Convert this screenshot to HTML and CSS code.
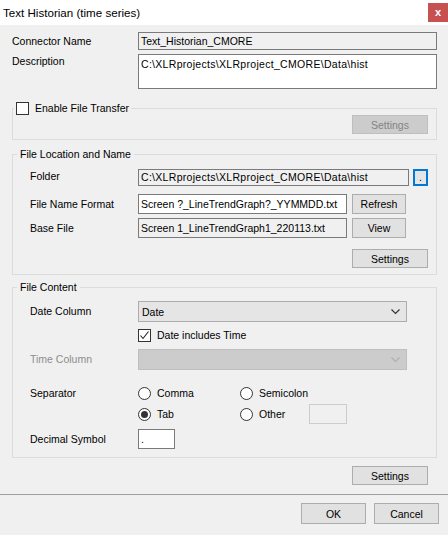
FILE: index.html
```html
<!DOCTYPE html>
<html>

<head>
    <title>Text Historian (time series)</title>
    <meta charset="UTF-8" />
    <link rel="stylesheet" href="styles.css">
</head>

<body>
    <div id="dialog">
        <div class="titlebar">
            <span class="title">Text Historian (time series)</span>
            <button class="close">x</button>
        </div>

        <div class="body">
            <div class="row row-name">
                <span class="label">Connector Name</span>
                <div class="field readonly w-full">Text_Historian_CMORE</div>
            </div>
            <div class="row row-desc">
                <span class="label">Description</span>
                <div class="field memo w-full path">C:\XLRprojects\XLRproject_CMORE\Data\hist</div>
            </div>

            <fieldset class="group group-transfer">
                <legend><span class="check"></span>Enable File Transfer</legend>
                <div class="actions">
                    <button class="btn btn-settings" disabled>Settings</button>
                </div>
            </fieldset>

            <fieldset class="group group-location">
                <legend>File Location and Name</legend>
                <div class="row row-folder">
                    <span class="label">Folder</span>
                    <div class="field readonly w-folder path">C:\XLRprojects\XLRproject_CMORE\Data\hist</div>
                    <button class="btn btn-dots">.</button>
                </div>
                <div class="row row-format">
                    <span class="label">File Name Format</span>
                    <div class="field w-file">Screen ?_LineTrendGraph?_YYMMDD.txt</div>
                    <button class="btn btn-side">Refresh</button>
                </div>
                <div class="row row-base">
                    <span class="label">Base File</span>
                    <div class="field readonly w-file">Screen 1_LineTrendGraph1_220113.txt</div>
                    <button class="btn btn-side">View</button>
                </div>
                <div class="actions actions-location">
                    <button class="btn btn-settings">Settings</button>
                </div>
            </fieldset>

            <fieldset class="group group-content">
                <legend>File Content</legend>
                <div class="row row-date">
                    <span class="label">Date Column</span>
                    <div class="combo">
                        <span>Date</span>
                        <svg width="9" height="6" viewBox="0 0 9 6"><path d="M0.5 0.5 L4.5 4.5 L8.5 0.5" fill="none" stroke="#333" stroke-width="1.2"/></svg>
                    </div>
                </div>
                <div class="row row-includes">
                    <span class="label"></span>
                    <span class="check checked">
                        <svg width="11" height="11" viewBox="0 0 11 11"><path d="M1.5 5.5 L4 8.5 L9.5 1.5" fill="none" stroke="#222" stroke-width="1.1"/></svg>
                    </span>
                    <span class="check-text">Date includes Time</span>
                </div>
                <div class="row row-time">
                    <span class="label disabled">Time Column</span>
                    <div class="combo combo-disabled">
                        <span></span>
                        <svg width="9" height="6" viewBox="0 0 9 6"><path d="M0.5 0.5 L4.5 4.5 L8.5 0.5" fill="none" stroke="#b0b0b0" stroke-width="1.2"/></svg>
                    </div>
                </div>
                <div class="row row-separator">
                    <span class="label">Separator</span>
                    <div class="radios">
                        <span class="radio-item"><span class="radio"></span>Comma</span>
                        <span class="radio-item"><span class="radio"></span>Semicolon</span>
                        <span class="radio-item"><span class="radio on"></span>Tab</span>
                        <span class="radio-item"><span class="radio"></span><span class="radio-text">Other</span><span class="field other"></span></span>
                    </div>
                </div>
                <div class="row row-decimal">
                    <span class="label">Decimal Symbol</span>
                    <div class="field decimal">.</div>
                </div>
            </fieldset>

            <div class="actions actions-content">
                <button class="btn btn-settings">Settings</button>
            </div>
        </div>

        <div class="footer">
            <button class="btn btn-dialog">OK</button>
            <button class="btn btn-dialog">Cancel</button>
        </div>
    </div>
</body>

</html>
```

FILE: styles.css
```css
* {
    box-sizing: border-box;
}

body {
    margin: 0;
    background: #f0f0f0;
    font-family: "Liberation Sans", Arial, sans-serif;
    font-size: 10.5px;
    color: #000;
}

#dialog {
    width: 448px;
    height: 535px;
    background: #f0f0f0;
}

/* window caption */
.titlebar {
    height: 25px;
    background: #fff;
    display: flex;
    justify-content: space-between;
    align-items: flex-start;
}

.title {
    font-size: 11.6px;
    line-height: 15px;
    padding: 5px 0 0 3px;
}

.close {
    width: 20px;
    height: 19px;
    margin-top: 3px;
    padding: 0 0 2px 0;
    border: 0;
    background: #c75050;
    color: #fff;
    font: bold 11px "Liberation Sans", Arial, sans-serif;
}

.body {
    padding: 0 11px 0 12px;
}

.row {
    display: flex;
    align-items: flex-start;
}

.label {
    flex: none;
    width: 126px;
    line-height: 18px;
}

.label.disabled {
    color: #8d8d8d;
}

/* text boxes */
.field {
    flex: none;
    height: 18px;
    border: 1px solid #7a7a7a;
    background: #fff;
    padding: 0 2px;
    line-height: 16px;
    white-space: nowrap;
    overflow: hidden;
}

.field.readonly {
    background: #f0f0f0;
}

.path {
    letter-spacing: 0.3px;
}

.w-full {
    width: 299px;
}

.row-name {
    margin-top: 7px;
}

.row-desc {
    margin-top: 4px;
}

.row-desc .label {
    line-height: 14px;
}

.field.memo {
    height: 35px;
    padding-top: 2px;
    line-height: 14px;
}

/* group boxes */
.group {
    margin: 0;
    border: 1px solid #dcdcdc;
    padding: 0 8px 0 17px;
    min-width: 0;
}

.group legend {
    padding: 0 3px;
    margin-left: -13px;
    line-height: 14px;
}

.group .label {
    width: 108px;
}

.group-transfer {
    margin-top: 13px;
    padding-bottom: 5px;
}

.group-transfer legend {
    display: flex;
    align-items: center;
    margin-left: -16px;
    padding: 0 2px 0 2px;
    line-height: 13px;
}

.group-transfer legend .check {
    margin-right: 6px;
}

.actions {
    display: flex;
    justify-content: flex-end;
}

.group-location {
    margin-top: 7px;
    padding-bottom: 6px;
}

.row-folder {
    margin-top: 8px;
}

.row-folder .label,
.row-folder .field {
    height: 17px;
    line-height: 15px;
}

.w-folder {
    width: 271px;
}

.row-format {
    margin-top: 8px;
}

.row-base {
    margin-top: 4px;
}

.row-format .label,
.row-base .label {
    line-height: 20px;
}

.w-file {
    width: 209px;
    height: 20px;
    line-height: 18px;
}

/* buttons */
.btn {
    height: 20px;
    padding: 0;
    border: 1px solid #adadad;
    background: #e1e1e1;
    color: #000;
    font: 10.5px "Liberation Sans", Arial, sans-serif;
}

.btn:disabled {
    border-color: #bfbfbf;
    background: #cccccc;
    color: #838383;
}

.btn-settings {
    width: 76px;
    height: 19px;
}

.btn-dots {
    width: 15px;
    height: 17px;
    margin-left: 4px;
    border: 2px solid #0078d7;
    background: #e5e5e5;
    line-height: 11px;
}

.btn-side {
    width: 54px;
    margin-left: 5px;
}

.actions-location {
    margin-top: 11px;
}

.group-content {
    margin-top: 5px;
    padding-bottom: 8px;
}

/* drop-down lists */
.combo {
    width: 269px;
    height: 21px;
    border: 1px solid #adadad;
    background: #e5e5e5;
    display: flex;
    justify-content: space-between;
    align-items: center;
    padding: 0 6px 0 3px;
}

.combo-disabled {
    border-color: #bfbfbf;
    background: #cccccc;
}

.row-date {
    margin-top: 7px;
}

.row-date .label,
.row-time .label {
    line-height: 21px;
}

.row-includes {
    margin-top: 7px;
    align-items: center;
}

.row-time {
    margin-top: 7px;
}

/* check boxes and radio buttons */
.check {
    flex: none;
    width: 13px;
    height: 13px;
    border: 1px solid #333;
    background: #fff;
    display: inline-flex;
    align-items: center;
    justify-content: center;
}

.check-text {
    margin-left: 6px;
    line-height: 13px;
}

.row-separator {
    margin-top: 16px;
}

.row-separator .label {
    line-height: 14px;
}

.radios {
    display: grid;
    grid-template-columns: 102px 110px;
    row-gap: 7px;
}

.radio-item {
    display: flex;
    align-items: center;
    height: 14px;
}

.radio {
    flex: none;
    width: 13px;
    height: 13px;
    border: 1px solid #333;
    border-radius: 50%;
    background: #fff;
    margin-right: 6px;
    display: flex;
    align-items: center;
    justify-content: center;
}

.radio.on::after {
    content: "";
    width: 7px;
    height: 7px;
    border-radius: 50%;
    background: #333;
}

.radio-text {
    width: 50px;
}

.field.other {
    width: 38px;
    height: 20px;
    border-color: #cccccc;
    background: #f0f0f0;
}

.row-decimal {
    margin-top: 8px;
}

.row-decimal .label {
    line-height: 20px;
}

.field.decimal {
    width: 37px;
    height: 20px;
    line-height: 18px;
}

.actions-content {
    margin-top: 8px;
    padding-right: 9px;
}

/* OK / Cancel strip */
.footer {
    margin-top: 9px;
    border-top: 1px solid #a0a0a0;
    display: flex;
    justify-content: flex-end;
    gap: 8px;
    padding: 8px 9px 0 0;
}

.btn-dialog {
    width: 65px;
    height: 21px;
}
```
